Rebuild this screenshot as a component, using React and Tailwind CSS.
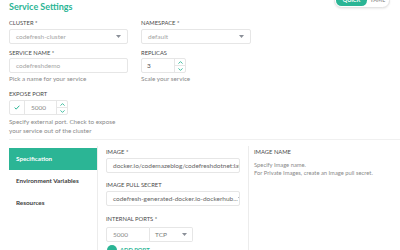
import React from 'react';

const GREEN = 'text-[#2bb595]';

function Label({ children, className = '' }) {
  return (
    <div className={`text-[5.8px] leading-[8px] uppercase text-[#4a4a4a] ${className}`}>
      {children}
    </div>
  );
}

function Help({ children, className = '' }) {
  return <div className={`text-[6.3px] leading-[9px] text-[#8a8a8a] ${className}`}>{children}</div>;
}

function Caret() {
  return (
    <svg width="5" height="3" viewBox="0 0 5 3" className="shrink-0">
      <path d="M0 0h5L2.5 3z" fill="#8a8f98" />
    </svg>
  );
}

function Box({ children, className = '' }) {
  return (
    <div className={`h-[15px] border border-[#e6e6e6] rounded-[2px] bg-white flex items-center text-[6.5px] ${className}`}>
      {children}
    </div>
  );
}

function Spinner() {
  return (
    <div className="w-[11px] h-full border-l border-[#e6e6e6] flex flex-col">
      <div className="flex-1 flex items-center justify-center border-b border-[#e6e6e6]">
        <svg width="5" height="3" viewBox="0 0 5 3"><path d="M0.5 2.6L2.5 0.6L4.5 2.6" stroke="#2bb595" strokeWidth="0.9" fill="none" /></svg>
      </div>
      <div className="flex-1 flex items-center justify-center">
        <svg width="5" height="3" viewBox="0 0 5 3"><path d="M0.5 0.4L2.5 2.4L4.5 0.4" stroke="#2bb595" strokeWidth="0.9" fill="none" /></svg>
      </div>
    </div>
  );
}

export default function App() {
  return (
    <div className="w-[400px] h-[250px] overflow-hidden bg-white font-['Lato','Liberation_Sans',sans-serif] text-[#4a4a4a]">
      {/* Header */}
      <div className="flex justify-between items-start pl-[9px] pr-[10px] h-[17px]">
        <h2 className={`pt-[1px] text-[9px] leading-[11px] font-bold ${GREEN}`}>Service Settings</h2>
        <div className="-mt-[7px] flex items-center rounded-full border border-[#e4e4e4] bg-white p-[1px] shadow-[0_1px_2px_rgba(0,0,0,0.08)]">
          <span className="h-[11px] w-[31px] rounded-full bg-[#2bb595] text-white text-[5.5px] font-bold flex items-center justify-center">QUICK</span>
          <span className="h-[11px] w-[21px] text-[#9a9a9a] text-[5.5px] font-bold flex items-center justify-center">YAML</span>
        </div>
      </div>

      <div className="px-[9px]">
        {/* Cluster / Namespace */}
        <div className="flex mt-[2px]">
          <div className="w-[119px]">
            <Label>Cluster *</Label>
            <Box className="mt-[2px] justify-between pl-[6px] pr-[6px] text-[#a5a5a5]">
              <span>codefresh-cluster</span>
              <Caret />
            </Box>
          </div>
          <div className="w-[110px] ml-[13px]">
            <Label>Namespace *</Label>
            <Box className="mt-[2px] justify-between pl-[6px] pr-[6px] text-[#a5a5a5]">
              <span>default</span>
              <Caret />
            </Box>
          </div>
        </div>

        {/* Service name / Replicas */}
        <div className="flex mt-[5px]">
          <div className="w-[119px]">
            <Label>Service name *</Label>
            <Box className="mt-[1px] pl-[6px] text-[#a5a5a5]">codefreshdemo</Box>
            <Help className="mt-[1px]">Pick a name for your service</Help>
          </div>
          <div className="w-[110px] ml-[13px]">
            <Label>Replicas</Label>
            <Box className="mt-[1px] w-[45px] text-[#555]">
              <span className="flex-1 pl-[5px]">3</span>
              <Spinner />
            </Box>
            <Help className="mt-[1px]">Scale your service</Help>
          </div>
        </div>

        {/* Expose port */}
        <Label className="mt-[7px]">Expose port</Label>
        <Box className="mt-[2px] w-[59px] text-[#555]">
          <div className="w-[15px] h-full border-r border-[#e6e6e6] flex items-center justify-center">
            <svg width="6" height="5" viewBox="0 0 6 5"><path d="M0.6 2.6L2.2 4.1L5.4 0.7" stroke="#2bb595" strokeWidth="1" fill="none" /></svg>
          </div>
          <span className="flex-1 pl-[6px] text-[#8a8a8a]">5000</span>
          <Spinner />
        </Box>
        <Help className="mt-[2px] w-[120px] leading-[8.5px]">Specify external port. Check to expose your service out of the cluster</Help>
      </div>

      <div className="mt-[4px] ml-[9px] border-t border-[#f0f0f0]" />

      {/* Tabs section */}
      <div className="flex ml-[9px] mt-[6px]">
        <div className="w-[89px] pt-[2px] border-r border-[#ececec] h-[110px]">
          <div className="h-[22px] bg-[#2bb595] text-white text-[6.3px] font-bold flex items-center pl-[7px]">Specification</div>
          <div className="h-[22px] text-[6.3px] font-bold flex items-center pl-[7px] text-[#3d3d3d]">Environment Variables</div>
          <div className="h-[22px] text-[6.3px] font-bold flex items-center pl-[7px] text-[#3d3d3d]">Resources</div>
        </div>

        <div className="w-[150px] pl-[8px] pr-[8px] pt-[2px]">
          <Label>Image *</Label>
          <Box className="mt-[2px] pl-[6px] text-[#666] overflow-hidden whitespace-nowrap">docker.io/codemazeblog/codefreshdotnet:latest</Box>
          <Label className="mt-[8px]">Image pull secret</Label>
          <Box className="mt-[2px] pl-[6px] pr-[5px] justify-between text-[#666] whitespace-nowrap overflow-hidden">
            <span>codefresh-generated-docker.io-dockerhub...</span>
            <Caret />
          </Box>
          <Label className="mt-[9px]">Internal ports *</Label>
          <div className="flex mt-[4px]">
            <Box className="w-[44px] pl-[6px] text-[#8a8a8a] rounded-r-none">5000</Box>
            <Box className="w-[43px] pl-[5px] pr-[5px] justify-between text-[#777] border-l-0 rounded-l-none">
              <span>TCP</span>
              <Caret />
            </Box>
          </div>
          <div className="flex items-center mt-[3px] ml-[1px]">
            <span className="w-[10px] h-[10px] rounded-full bg-[#2bb595]" />
            <span className={`ml-[3px] text-[5.8px] font-bold ${GREEN}`}>ADD PORT</span>
          </div>
        </div>

        <div className="flex-1 border-l border-[#ececec] pl-[5px] pt-[2px] h-[110px]">
          <Label>Image name</Label>
          <div className="mt-[5px] text-[5.8px] leading-[8px] text-[#8a8a8a]">
            Specify Image name.
            <br />
            For Private Images, create an Image pull secret.
          </div>
        </div>
      </div>
    </div>
  );
}
